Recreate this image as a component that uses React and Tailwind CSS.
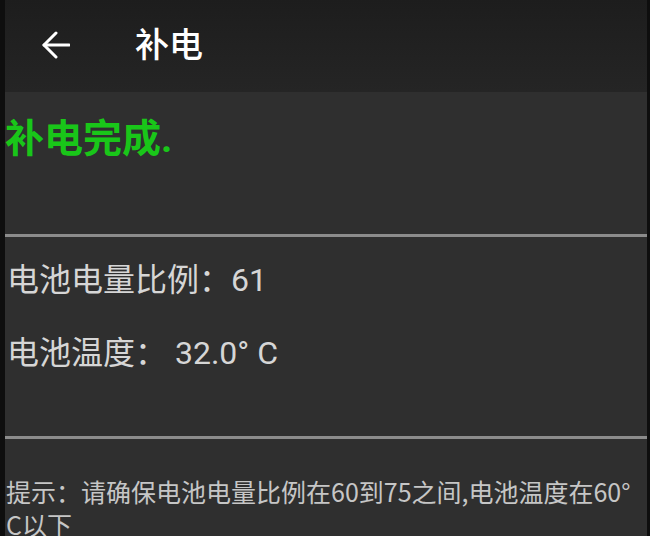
import React from 'react';

const BackArrow = () => (
  <svg width="28" height="28" viewBox="0 0 28 28" fill="none" stroke="white" strokeWidth="3" strokeLinecap="round" strokeLinejoin="round">
    <path d="M27 14H2" />
    <path d="M14 2 2 14l12 12" />
  </svg>
);

const Divider = ({ className }) => <div className={`h-[3px] bg-[#8c8c8c] ${className}`} />;

const App = () => {
  const battery = { level: 61, temp: '32.0' };

  return (
    <div className="w-[650px] h-[536px] overflow-hidden bg-[#0e0e0e] flex pl-[5px] pr-[3px] font-['Roboto','Noto_Sans_CJK_SC',sans-serif]">
      <div className="flex-1 flex flex-col">
        <div className="h-[92px] shrink-0 bg-gradient-to-b from-[#1d1d1d] to-[#252525] flex items-center">
          <div className="ml-[37px] mb-[3px]">
            <BackArrow />
          </div>
          <h1 className="ml-[65px] text-[34px] font-medium text-white leading-none mb-[2px]">补电</h1>
        </div>

        <div className="flex-1 bg-[#2f2f2f]">
          <p className="mt-[23px] h-[48px] leading-[48px] text-[39px] font-bold text-[#19c619]">补电完成.</p>

          <Divider className="mt-[71px]" />

          <p className="mt-[23px] pl-[2px] h-[40px] leading-[40px] text-[32px] text-[#d6d6d6]">
            电池电量比例：{battery.level}
          </p>
          <p className="mt-[33px] pl-[2px] h-[40px] leading-[40px] text-[32px] text-[#d6d6d6]">
            电池温度： {battery.temp}° C
          </p>

          <Divider className="mt-[63px]" />

          <p className="mt-[36px] pl-[1px] text-[25px] leading-[33px] text-[#c6c6c6] font-['Noto_Sans_CJK_SC',sans-serif]">
            提示：请确保电池电量比例在60到75之间,电池温度在60°
            <br />
            C以下
          </p>
        </div>
      </div>
    </div>
  );
};

export default App;
